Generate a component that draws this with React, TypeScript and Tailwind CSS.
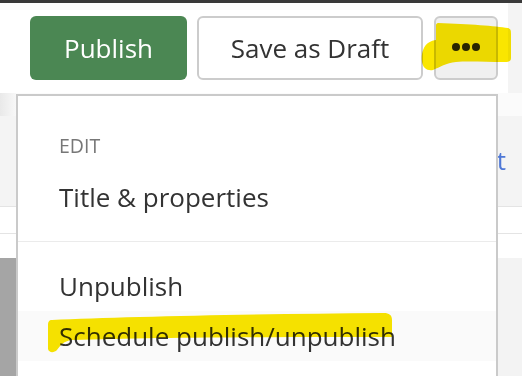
import React from "react";

const items = ["Unpublish", "Schedule publish/unpublish"];

export default function App() {
  return (
    <div className="relative w-[522px] h-[376px] overflow-hidden bg-white font-['Open_Sans',sans-serif] text-[#333]">
      {/* top edge */}
      <div className="h-[3px] bg-[#3a3a3a]" />

      {/* Toolbar */}
      <header className="flex h-[90px]">
        <div className="flex flex-1 items-start pl-[30px] pt-[13px]">
          <button className="h-[64px] w-[157px] rounded-[6px] bg-[#4b8753] text-[26px] text-white">
            Publish
          </button>
          <button className="ml-[10px] h-[64px] w-[226px] rounded-[6px] border-2 border-[#cccccc] bg-white text-[26px] text-[#333]">
            Save as Draft
          </button>
          <button className="ml-[11px] flex h-[64px] w-[64px] items-center justify-center gap-[2px] rounded-[6px] border-2 border-[#cccccc] bg-[#f0f0f0] pb-[2px]">
            <span className="h-[8px] w-[8px] rounded-full bg-[#2a2a2a]" />
            <span className="h-[8px] w-[8px] rounded-full bg-[#2a2a2a]" />
            <span className="h-[8px] w-[8px] rounded-full bg-[#2a2a2a]" />
          </button>
        </div>
        <div className="w-[14px] bg-[#f4f4f4]" />
      </header>

      {/* Page behind the menu */}
      <div className="flex h-[23px] bg-[#fbfbfb]">
        <div className="w-[16px] bg-gradient-to-r from-[#e9e9e9] to-[#f8f8f8]" />
      </div>
      <div className="flex h-[90px] justify-end bg-[#f4f4f4] pr-[16px] pt-[20px]">
        <span className="text-[26px] leading-[48px] text-[#4f78d6]">Edit</span>
      </div>
      <div className="h-px bg-[#e4e4e4]" />
      <div className="h-[26px] bg-white" />
      <div className="h-px bg-[#e4e4e4]" />
      <div className="h-[24px] bg-white" />
      <div className="flex h-[118px] bg-[#f3f3f3]">
        <div className="w-[40px] bg-[#a5a5a5]" />
      </div>

      {/* Dropdown menu */}
      <div className="absolute left-[16px] top-[94px] h-[300px] w-[482px] border-2 border-[#cacaca] bg-white">
        <div className="px-[41px] pt-[36px] pb-[19px]">
          <div className="h-[28px] text-[19.5px] leading-[28px] text-[#777]">EDIT</div>
          <div className="mt-[12px] h-[50px] text-[26px] leading-[50px]">Title &amp; properties</div>
        </div>
        <div className="h-px bg-[#ebebeb]" />
        <div className="pt-[19px]">
          {items.map((t, i) => (
            <div
              key={t}
              className={`h-[50px] px-[41px] text-[26px] leading-[50px] ${i === 1 ? "bg-[#fafafa]" : ""}`}
            >
              {t}
            </div>
          ))}
        </div>
      </div>

      {/* Marker highlights */}
      <svg
        className="pointer-events-none absolute left-0 top-0 mix-blend-multiply"
        width="522"
        height="376"
        viewBox="0 0 522 376"
      >
        <path
          fill="#fae600"
          d="M438 23 C470 24 495 26 508 28 C511 29 511 31 511 34 L511 58 C511 61 509 62 505 62 C485 62 468 61 456 62 C446 63 440 67 433 70 C427 71 423 68 422 62 C421 54 423 47 428 43 C431 41 434 40 436 40 L436 25 C436 24 437 23 438 23 Z"
        />
        <path
          fill="#fae600"
          d="M52 320 C120 317 250 314 384 313 C389 313 392 315 392 320 L392 337 C300 337 160 337 72 340 C63 341 60 346 57 350 C54 353 49 353 48 349 L48 325 C48 322 49 320 52 320 Z"
        />
      </svg>
    </div>
  );
}
